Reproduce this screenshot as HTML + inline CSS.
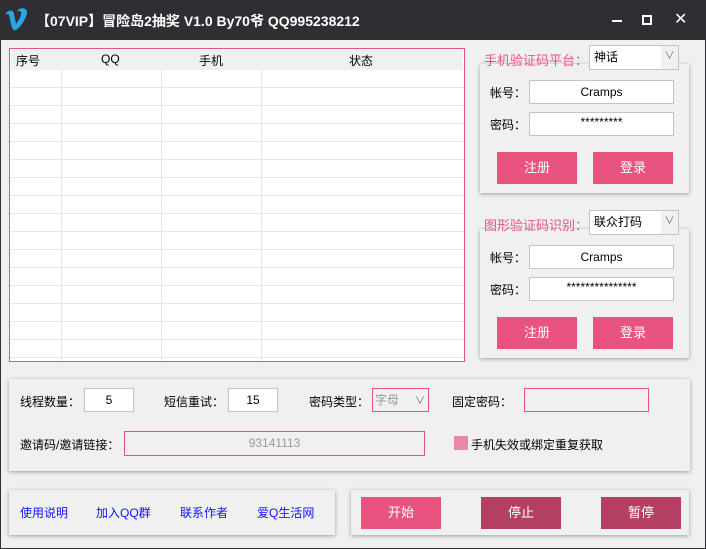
<!DOCTYPE html><html><head><meta charset="utf-8"><style>
*{margin:0;padding:0;box-sizing:border-box}
body{width:706px;height:549px;overflow:hidden;background:#2f2f33;font-family:"Liberation Sans","Noto Sans CJK SC",sans-serif;font-size:12px;color:#000;position:relative}
.a{position:absolute}
#main{left:1px;top:40px;width:704px;height:508px;background:#f0f0f0}
.panel{position:absolute;background:#f0f0f0;box-shadow:0 1px 4px rgba(0,0,0,.35)}
.inp{position:absolute;background:#fff;border:1px solid #c4c4c4;text-align:center;line-height:22px;font-size:12px}
.btn{position:absolute;background:#e85380;color:#fff;text-align:center;font-size:13px}
.dk{background:#b44063}
.lbl{position:absolute;font-size:12px}
.pink{color:#e8508a;font-size:13px}
.link{position:absolute;color:#1010ff;font-size:12px}
</style></head><body>
<svg class="a" style="left:5px;top:8px" width="30" height="24" viewBox="0 0 30 24"><path d="M1 5 C4 2 8 1 9 6 L11 16 C14 12 17 7 16 4 C15 2 13 3 12 4 C13 -1 22 -1 22 4 C22 10 15 20 11 22 C8 23 7 20 6 16 L4 7 C3 5 2 6 1 7Z" fill="#2aa6de"/></svg>
<div class="a" style="left:36px;top:11px;color:#fff;font-size:14px;font-weight:bold">【07VIP】冒险岛2抽奖 V1.0 By70爷 QQ995238212</div>
<div class="a" style="left:612px;top:20px;width:10px;height:2px;background:#fff"></div>
<div class="a" style="left:642px;top:15px;width:10px;height:10px;border:2px solid #fff"></div>
<div class="a" style="left:674px;top:9px;color:#fff;font-size:16px">✕</div>
<div id="main" class="a">
<div class="a" style="left:8px;top:8px;width:456px;height:314px;border:1px solid #e8508a;background:#fff;overflow:hidden">
<div class="a" style="left:1px;top:1px;width:452px;height:20px;background:#f0f0f0"></div>
<div class="a" style="left:6px;top:3px">序号</div>
<div class="a" style="left:91px;top:3px">QQ</div>
<div class="a" style="left:189px;top:3px">手机</div>
<div class="a" style="left:339px;top:3px">状态</div>
<svg class="a" style="left:0;top:0" width="456" height="314">
<g stroke="#e8e8e0" stroke-width="1">
<line x1="51.5" y1="21" x2="51.5" y2="312"/><line x1="151.5" y1="21" x2="151.5" y2="312"/><line x1="251.5" y1="21" x2="251.5" y2="312"/>
<line x1="0" y1="38.5" x2="456" y2="38.5"/><line x1="0" y1="56.5" x2="456" y2="56.5"/><line x1="0" y1="74.5" x2="456" y2="74.5"/><line x1="0" y1="92.5" x2="456" y2="92.5"/><line x1="0" y1="110.5" x2="456" y2="110.5"/><line x1="0" y1="128.5" x2="456" y2="128.5"/><line x1="0" y1="146.5" x2="456" y2="146.5"/><line x1="0" y1="164.5" x2="456" y2="164.5"/><line x1="0" y1="182.5" x2="456" y2="182.5"/><line x1="0" y1="200.5" x2="456" y2="200.5"/><line x1="0" y1="218.5" x2="456" y2="218.5"/><line x1="0" y1="236.5" x2="456" y2="236.5"/><line x1="0" y1="254.5" x2="456" y2="254.5"/><line x1="0" y1="272.5" x2="456" y2="272.5"/><line x1="0" y1="290.5" x2="456" y2="290.5"/><line x1="0" y1="308.5" x2="456" y2="308.5"/>
</g></svg>
</div>
<div class="panel" style="left:479px;top:24px;width:209px;height:129px"></div>
<div class="lbl pink" style="left:483px;top:10px">手机验证码平台：</div>
<div class="inp" style="left:588px;top:5px;width:90px;height:25px;text-align:left;padding-left:4px;background:#fff">神话<span style="position:absolute;right:0;top:0;width:17px;height:23px;background:#f0f0f0;color:#666;text-align:center;font-size:10px">∨</span></div>
<div class="lbl" style="left:489px;top:44px">帐号：</div>
<div class="inp" style="left:528px;top:40px;width:145px;height:24px">Cramps</div>
<div class="lbl" style="left:489px;top:76px">密码：</div>
<div class="inp" style="left:528px;top:72px;width:145px;height:24px;line-height:18px">*********</div>
<div class="btn" style="left:496px;top:112px;width:80px;height:32px;line-height:32px">注册</div>
<div class="btn" style="left:592px;top:112px;width:80px;height:32px;line-height:32px">登录</div>
<div class="panel" style="left:479px;top:189px;width:209px;height:129px"></div>
<div class="lbl pink" style="left:483px;top:175px">图形验证码识别：</div>
<div class="inp" style="left:588px;top:170px;width:90px;height:25px;text-align:left;padding-left:4px">联众打码<span style="position:absolute;right:0;top:0;width:17px;height:23px;background:#f0f0f0;color:#666;text-align:center;font-size:10px">∨</span></div>
<div class="lbl" style="left:489px;top:209px">帐号：</div>
<div class="inp" style="left:528px;top:205px;width:145px;height:24px">Cramps</div>
<div class="lbl" style="left:489px;top:241px">密码：</div>
<div class="inp" style="left:528px;top:237px;width:145px;height:24px;line-height:18px">***************</div>
<div class="btn" style="left:496px;top:277px;width:80px;height:32px;line-height:32px">注册</div>
<div class="btn" style="left:592px;top:277px;width:80px;height:32px;line-height:32px">登录</div>
<div class="panel" style="left:8px;top:339px;width:681px;height:92px"></div>
<div class="lbl" style="left:19px;top:353px">线程数量：</div>
<div class="inp" style="left:83px;top:348px;width:50px;height:24px">5</div>
<div class="lbl" style="left:163px;top:353px">短信重试：</div>
<div class="inp" style="left:227px;top:348px;width:50px;height:24px">15</div>
<div class="lbl" style="left:308px;top:353px">密码类型：</div>
<div class="a" style="left:371px;top:348px;width:57px;height:24px;border:1px solid #e8508a;color:#999;padding:2px"><span style="display:inline-block;width:36px;height:18px;background:#f0f0f0;line-height:18px">字母</span><span style="position:absolute;right:3px;top:3px;color:#666;font-size:10px">∨</span></div>
<div class="lbl" style="left:451px;top:353px">固定密码：</div>
<div class="a" style="left:523px;top:348px;width:125px;height:24px;border:1px solid #e8508a"></div>
<div class="lbl" style="left:19px;top:396px">邀请码/邀请链接：</div>
<div class="a" style="left:123px;top:391px;width:301px;height:25px;border:1px solid #e8508a;color:#999;text-align:center;line-height:22px">93141113</div>
<div class="a" style="left:453px;top:396px;width:14px;height:14px;background:#ea86a6"></div>
<div class="lbl" style="left:470px;top:396px">手机失效或绑定重复获取</div>
<div class="panel" style="left:8px;top:450px;width:326px;height:45px"></div>
<div class="link" style="left:19px;top:464px">使用说明</div>
<div class="link" style="left:95px;top:464px">加入QQ群</div>
<div class="link" style="left:179px;top:464px">联系作者</div>
<div class="link" style="left:256px;top:464px">爱Q生活网</div>
<div class="panel" style="left:350px;top:450px;width:338px;height:45px"></div>
<div class="btn" style="left:360px;top:457px;width:80px;height:32px;line-height:32px">开始</div>
<div class="btn dk" style="left:480px;top:457px;width:80px;height:32px;line-height:32px">停止</div>
<div class="btn dk" style="left:600px;top:457px;width:80px;height:32px;line-height:32px">暂停</div>
</div>
</body></html>
